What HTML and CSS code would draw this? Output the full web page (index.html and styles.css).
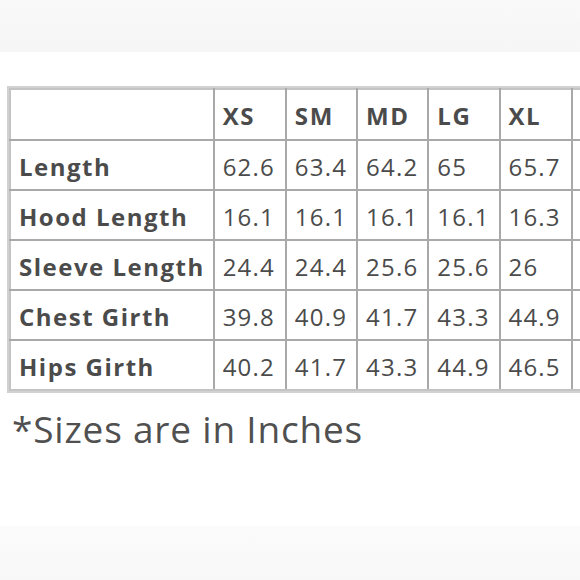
FILE: index.html
```html
<!DOCTYPE html>
<html>
<head>
<meta charset="utf-8">
<link rel="stylesheet" href="styles.css">
</head>
<body>
<div class="band band-top"></div>
<main class="content">
  <div class="chart">
    <table class="sizes">
      <colgroup>
        <col class="c-label">
        <col class="c-size c-wide"><col class="c-size"><col class="c-size"><col class="c-size"><col class="c-size c-wide"><col class="c-size">
      </colgroup>
      <thead>
        <tr><th class="corner"></th><th>XS</th><th>SM</th><th>MD</th><th>LG</th><th>XL</th><th>2XL</th></tr>
      </thead>
      <tbody>
        <tr><th>Length</th><td>62.6</td><td>63.4</td><td>64.2</td><td>65</td><td>65.7</td><td>66.5</td></tr>
        <tr><th>Hood Length</th><td>16.1</td><td>16.1</td><td>16.1</td><td>16.1</td><td>16.3</td><td>16.3</td></tr>
        <tr><th>Sleeve Length</th><td>24.4</td><td>24.4</td><td>25.6</td><td>25.6</td><td>26</td><td>26</td></tr>
        <tr><th>Chest Girth</th><td>39.8</td><td>40.9</td><td>41.7</td><td>43.3</td><td>44.9</td><td>46.5</td></tr>
        <tr><th>Hips Girth</th><td>40.2</td><td>41.7</td><td>43.3</td><td>44.9</td><td>46.5</td><td>48</td></tr>
      </tbody>
    </table>
  </div>
  <p class="note">*Sizes are in Inches</p>
</main>
<div class="band band-bottom"></div>
</body>
</html>
```

FILE: styles.css
```css
html, body {
  margin: 0;
  padding: 0;
  background: #ffffff;
}
body {
  width: 580px;
  height: 580px;
  overflow: hidden;
  display: flex;
  flex-direction: column;
  font-family: "Open Sans", "DejaVu Sans", sans-serif;
  color: #4b4b4b;
}
.band {
  flex: none;
  background: #f7f7f7;
}
.band-top {
  height: 52px;
  background: linear-gradient(180deg, #f9f9f9, #f6f6f6);
}
.band-bottom {
  height: 54px;
  margin-top: auto;
  background: linear-gradient(180deg, #fbfbfb, #f8f8f8);
}
.content {
  flex: 1;
  padding: 34px 0 0 7px;
}
.chart {
  display: inline-block;
  border: 2px solid #d2d2d2;
  border-right: none;
  white-space: nowrap;
}
.sizes {
  border-collapse: collapse;
  table-layout: fixed;
  width: 635px;
}
.c-label { width: 203px; }
.c-size { width: 71px; }
.c-wide { width: 72px; }
.sizes th,
.sizes td {
  border: 2px solid #a9a9a9;
  height: 45px;
  padding: 3px 0 0 8px;
  text-align: left;
  vertical-align: middle;
  font-size: 24px;
  line-height: 30px;
}
.sizes th {
  font-weight: 700;
  letter-spacing: 1.5px;
}
.sizes thead th {
  height: 46px;
  letter-spacing: 1.6px;
}
.sizes td {
  font-weight: 400;
  letter-spacing: 1.2px;
}
.sizes tr > :first-child {
  border-left-color: #c4c4c4;
}
.sizes thead th {
  border-top-color: #c4c4c4;
}
.sizes tbody tr:last-child > * {
  border-bottom-color: #c4c4c4;
}
.note {
  margin: 9px 0 0 5px;
  font-size: 37px;
  line-height: 44px;
  letter-spacing: 0.8px;
  color: #505050;
}
```
